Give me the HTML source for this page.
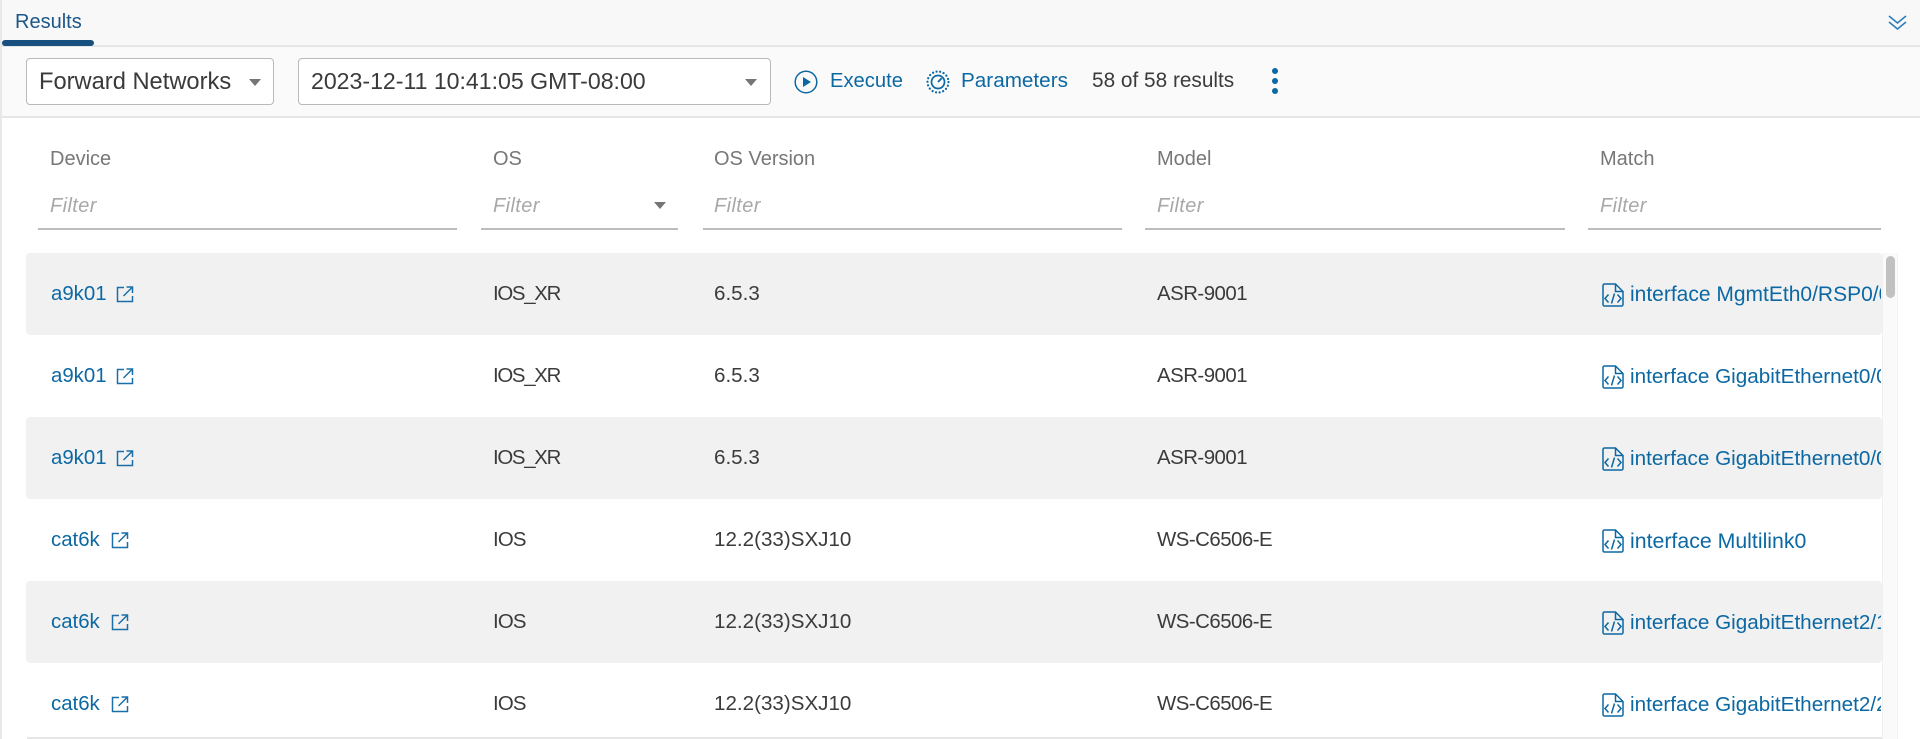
<!DOCTYPE html>
<html><head><meta charset="utf-8">
<style>
html,body{margin:0;padding:0;background:#fff}
body{width:1920px;height:739px;position:relative;overflow:hidden;font-family:"Liberation Sans",Arial,sans-serif;font-size:20.4px;color:#3b3b3b}
.a{position:absolute;white-space:nowrap}
.t{position:absolute;white-space:nowrap;line-height:24px;height:24px}
.l{color:#0c68a3}
.h{color:#777;font-size:20px}
.f{color:#a8a8a8;font-style:italic;font-size:20px;letter-spacing:.4px}
.u{position:absolute;top:228px;height:2px;background:#bdbdbd}
.row{position:absolute;left:26px;width:1856px;height:82px;border-radius:4px}
.g{background:#f1f1f1}
.box{position:absolute;top:58px;height:45px;background:#fff;border:1px solid #b9b9b9;border-radius:4px}
.tri{position:absolute;width:0;height:0;border-left:6.5px solid transparent;border-right:6.5px solid transparent;border-top:7px solid #757575}
.m{position:absolute;left:1630px;width:251px;height:26px;line-height:24px;overflow:hidden;white-space:nowrap;color:#0c68a3;font-size:21px}
.ge{font-size:20.7px}
.os{letter-spacing:-.8px}
.xr{letter-spacing:-1.3px}
.v{font-size:20.6px}
.mo{letter-spacing:-.5px}
svg{position:absolute;overflow:visible}
</style></head><body>

<div class="a" style="left:0;top:0;width:1920px;height:45px;background:#f8f8f8"></div>
<div class="a" style="left:0;top:45px;width:1920px;height:2px;background:#e6e6e6"></div>
<div class="a" style="left:0;top:47px;width:1920px;height:69px;background:#fafafa"></div>
<div class="a" style="left:0;top:116px;width:1920px;height:2px;background:#e6e6e6"></div>
<div class="a" style="left:0;top:0;width:2px;height:739px;background:#e8e8e8"></div>

<div class="t" style="left:15px;top:10px;font-size:20px;color:#1c5688">Results</div>
<div class="a" style="left:2px;top:40px;width:92px;height:6px;background:#17507f;border-radius:3px"></div>
<svg style="left:1888px;top:14px" width="20" height="18" viewBox="0 0 20 18" fill="none" stroke="#2a7dbb" stroke-width="1.6"><path d="M1 2l8.500 7 8.500-7M1 8l8.500 7 8.500-7"/></svg>

<div class="box" style="left:26px;width:246px"></div>
<div class="t" style="left:39px;top:70px;font-size:23.700px;color:#3a3a3a">Forward Networks</div>
<div class="tri" style="left:249px;top:79px"></div>
<div class="box" style="left:298px;width:471px"></div>
<div class="t" style="left:311px;top:69px;font-size:23.100px;color:#3a3a3a">2023-12-11 10:41:05 GMT-08:00</div>
<div class="tri" style="left:745px;top:79px"></div>

<svg style="left:794px;top:70px" width="24" height="24" viewBox="0 0 24 24" fill="none"><circle cx="12" cy="12" r="10.800" stroke="#0c68a3" stroke-width="1.500"/><path d="M9 7l8 5-8 5z" fill="#0c68a3"/></svg>
<div class="t l" style="left:830px;top:69px;font-size:20.200px">Execute</div>
<svg style="left:926px;top:70px" width="24" height="24" viewBox="0 0 24 24" fill="none"><circle cx="12" cy="12" r="6.500" stroke="#0c68a3" stroke-width="1.700"/><circle cx="12" cy="12" r="10.500" stroke="#0c68a3" stroke-width="2.200" stroke-linecap="round" stroke-dasharray="0.100 3.565"/><path d="M12 12l3.700-3.700" stroke="#0c68a3" stroke-width="1.800"/></svg>
<div class="t l" style="left:961px;top:69px;font-size:20.700px">Parameters</div>
<div class="t" style="left:1092px;top:69px;font-size:20.800px">58 of 58 results</div>
<svg style="left:1268px;top:66px" width="14" height="30" viewBox="0 0 14 30" fill="#0c68a3"><circle cx="7" cy="5" r="3"/><circle cx="7" cy="15" r="3"/><circle cx="7" cy="25" r="3"/></svg>

<div class="t h" style="left:50px;top:147px">Device</div>
<div class="t h" style="left:493px;top:147px">OS</div>
<div class="t h" style="left:714px;top:147px">OS Version</div>
<div class="t h" style="left:1157px;top:147px">Model</div>
<div class="t h" style="left:1600px;top:147px">Match</div>

<div class="t f" style="left:50px;top:194px">Filter</div>
<div class="t f" style="left:493px;top:194px">Filter</div>
<div class="t f" style="left:714px;top:194px">Filter</div>
<div class="t f" style="left:1157px;top:194px">Filter</div>
<div class="t f" style="left:1600px;top:194px">Filter</div>
<div class="tri" style="left:654px;top:202px"></div>
<div class="u" style="left:38px;width:419px"></div>
<div class="u" style="left:481px;width:197px"></div>
<div class="u" style="left:703px;width:419px"></div>
<div class="u" style="left:1145px;width:420px"></div>
<div class="u" style="left:1588px;width:293px"></div>

<div class="row g" style="top:253px"></div>
<div class="row g" style="top:417px"></div>
<div class="row g" style="top:581px"></div>
<div class="a" style="left:27px;top:737px;width:1855px;height:2px;background:#e6e6e6"></div>

<div class="a" style="left:1882px;top:253px;width:16px;height:486px;background:#fafafa;border-left:1px solid #f0f0f0;border-right:1px solid #f3f3f3;box-sizing:border-box"></div>
<div class="a" style="left:1886px;top:256px;width:9px;height:42px;background:#c1c1c1;border-radius:5px"></div>

<!-- rows -->
<div class="t l" style="left:51px;top:282px">a9k01</div>
<svg style="left:116px;top:286px" width="18" height="17" viewBox="0 0 18 17" fill="none" stroke="#1a6fa8" stroke-width="1.500"><path d="M8 1.500H1.500v14h15V10M10.500 1h6v6M16 1.500L7.500 10"/></svg>
<div class="t xr" style="left:493px;top:282px">IOS_XR</div><div class="t v" style="left:714px;top:282px">6.5.3</div><div class="t mo" style="left:1157px;top:282px">ASR-9001</div>
<svg style="left:1601.500px;top:282.500px" width="22" height="24" viewBox="0 0 22 24" fill="none" stroke="#0c68a3" stroke-width="1.500"><path d="M2.500 1h11L21 8.500V21.500a1.500 1.500 0 0 1-1.500 1.500h-17A1.500 1.500 0 0 1 1 21.500v-19A1.500 1.500 0 0 1 2.500 1zM13.500 1v7.500H21M6.500 11.500L3 15.500l3.500 4M15.500 11.500l3.500 4-3.500 4M12.500 10.500l-3 10"/></svg>
<div class="m" style="top:283px">interface MgmtEth0/RSP0/0</div>

<div class="t l" style="left:51px;top:364px">a9k01</div>
<svg style="left:116px;top:368px" width="18" height="17" viewBox="0 0 18 17" fill="none" stroke="#1a6fa8" stroke-width="1.500"><path d="M8 1.500H1.500v14h15V10M10.500 1h6v6M16 1.500L7.500 10"/></svg>
<div class="t xr" style="left:493px;top:364px">IOS_XR</div><div class="t v" style="left:714px;top:364px">6.5.3</div><div class="t mo" style="left:1157px;top:364px">ASR-9001</div>
<svg style="left:1601.500px;top:364.500px" width="22" height="24" viewBox="0 0 22 24" fill="none" stroke="#0c68a3" stroke-width="1.500"><path d="M2.500 1h11L21 8.500V21.500a1.500 1.500 0 0 1-1.500 1.500h-17A1.500 1.500 0 0 1 1 21.500v-19A1.500 1.500 0 0 1 2.500 1zM13.500 1v7.500H21M6.500 11.500L3 15.500l3.500 4M15.500 11.500l3.500 4-3.500 4M12.500 10.500l-3 10"/></svg>
<div class="m ge" style="top:365px">interface GigabitEthernet0/0/0</div>

<div class="t l" style="left:51px;top:446px">a9k01</div>
<svg style="left:116px;top:450px" width="18" height="17" viewBox="0 0 18 17" fill="none" stroke="#1a6fa8" stroke-width="1.500"><path d="M8 1.500H1.500v14h15V10M10.500 1h6v6M16 1.500L7.500 10"/></svg>
<div class="t xr" style="left:493px;top:446px">IOS_XR</div><div class="t v" style="left:714px;top:446px">6.5.3</div><div class="t mo" style="left:1157px;top:446px">ASR-9001</div>
<svg style="left:1601.500px;top:446.500px" width="22" height="24" viewBox="0 0 22 24" fill="none" stroke="#0c68a3" stroke-width="1.500"><path d="M2.500 1h11L21 8.500V21.500a1.500 1.500 0 0 1-1.500 1.500h-17A1.500 1.500 0 0 1 1 21.500v-19A1.500 1.500 0 0 1 2.500 1zM13.500 1v7.500H21M6.500 11.500L3 15.500l3.500 4M15.500 11.500l3.500 4-3.500 4M12.500 10.500l-3 10"/></svg>
<div class="m ge" style="top:447px">interface GigabitEthernet0/0/1</div>

<div class="t l" style="left:51px;top:528px">cat6k</div>
<svg style="left:111px;top:532px" width="18" height="17" viewBox="0 0 18 17" fill="none" stroke="#1a6fa8" stroke-width="1.500"><path d="M8 1.500H1.500v14h15V10M10.500 1h6v6M16 1.500L7.500 10"/></svg>
<div class="t os" style="left:493px;top:528px">IOS</div><div class="t v" style="left:714px;top:528px">12.2(33)SXJ10</div><div class="t mo" style="left:1157px;top:528px">WS-C6506-E</div>
<svg style="left:1601.500px;top:528.500px" width="22" height="24" viewBox="0 0 22 24" fill="none" stroke="#0c68a3" stroke-width="1.500"><path d="M2.500 1h11L21 8.500V21.500a1.500 1.500 0 0 1-1.500 1.500h-17A1.500 1.500 0 0 1 1 21.500v-19A1.500 1.500 0 0 1 2.500 1zM13.500 1v7.500H21M6.500 11.500L3 15.500l3.500 4M15.500 11.500l3.500 4-3.500 4M12.500 10.500l-3 10"/></svg>
<div class="m" style="top:529px;font-size:21.300px">interface Multilink0</div>

<div class="t l" style="left:51px;top:610px">cat6k</div>
<svg style="left:111px;top:614px" width="18" height="17" viewBox="0 0 18 17" fill="none" stroke="#1a6fa8" stroke-width="1.500"><path d="M8 1.500H1.500v14h15V10M10.500 1h6v6M16 1.500L7.500 10"/></svg>
<div class="t os" style="left:493px;top:610px">IOS</div><div class="t v" style="left:714px;top:610px">12.2(33)SXJ10</div><div class="t mo" style="left:1157px;top:610px">WS-C6506-E</div>
<svg style="left:1601.500px;top:610.500px" width="22" height="24" viewBox="0 0 22 24" fill="none" stroke="#0c68a3" stroke-width="1.500"><path d="M2.500 1h11L21 8.500V21.500a1.500 1.500 0 0 1-1.500 1.500h-17A1.500 1.500 0 0 1 1 21.500v-19A1.500 1.500 0 0 1 2.500 1zM13.500 1v7.500H21M6.500 11.500L3 15.500l3.500 4M15.500 11.500l3.500 4-3.500 4M12.500 10.500l-3 10"/></svg>
<div class="m ge" style="top:611px">interface GigabitEthernet2/1</div>

<div class="t l" style="left:51px;top:692px">cat6k</div>
<svg style="left:111px;top:696px" width="18" height="17" viewBox="0 0 18 17" fill="none" stroke="#1a6fa8" stroke-width="1.500"><path d="M8 1.500H1.500v14h15V10M10.500 1h6v6M16 1.500L7.500 10"/></svg>
<div class="t os" style="left:493px;top:692px">IOS</div><div class="t v" style="left:714px;top:692px">12.2(33)SXJ10</div><div class="t mo" style="left:1157px;top:692px">WS-C6506-E</div>
<svg style="left:1601.500px;top:692.500px" width="22" height="24" viewBox="0 0 22 24" fill="none" stroke="#0c68a3" stroke-width="1.500"><path d="M2.500 1h11L21 8.500V21.500a1.500 1.500 0 0 1-1.500 1.500h-17A1.500 1.500 0 0 1 1 21.500v-19A1.500 1.500 0 0 1 2.500 1zM13.500 1v7.500H21M6.500 11.500L3 15.500l3.500 4M15.500 11.500l3.500 4-3.500 4M12.500 10.500l-3 10"/></svg>
<div class="m ge" style="top:693px">interface GigabitEthernet2/2</div>

</body></html>
